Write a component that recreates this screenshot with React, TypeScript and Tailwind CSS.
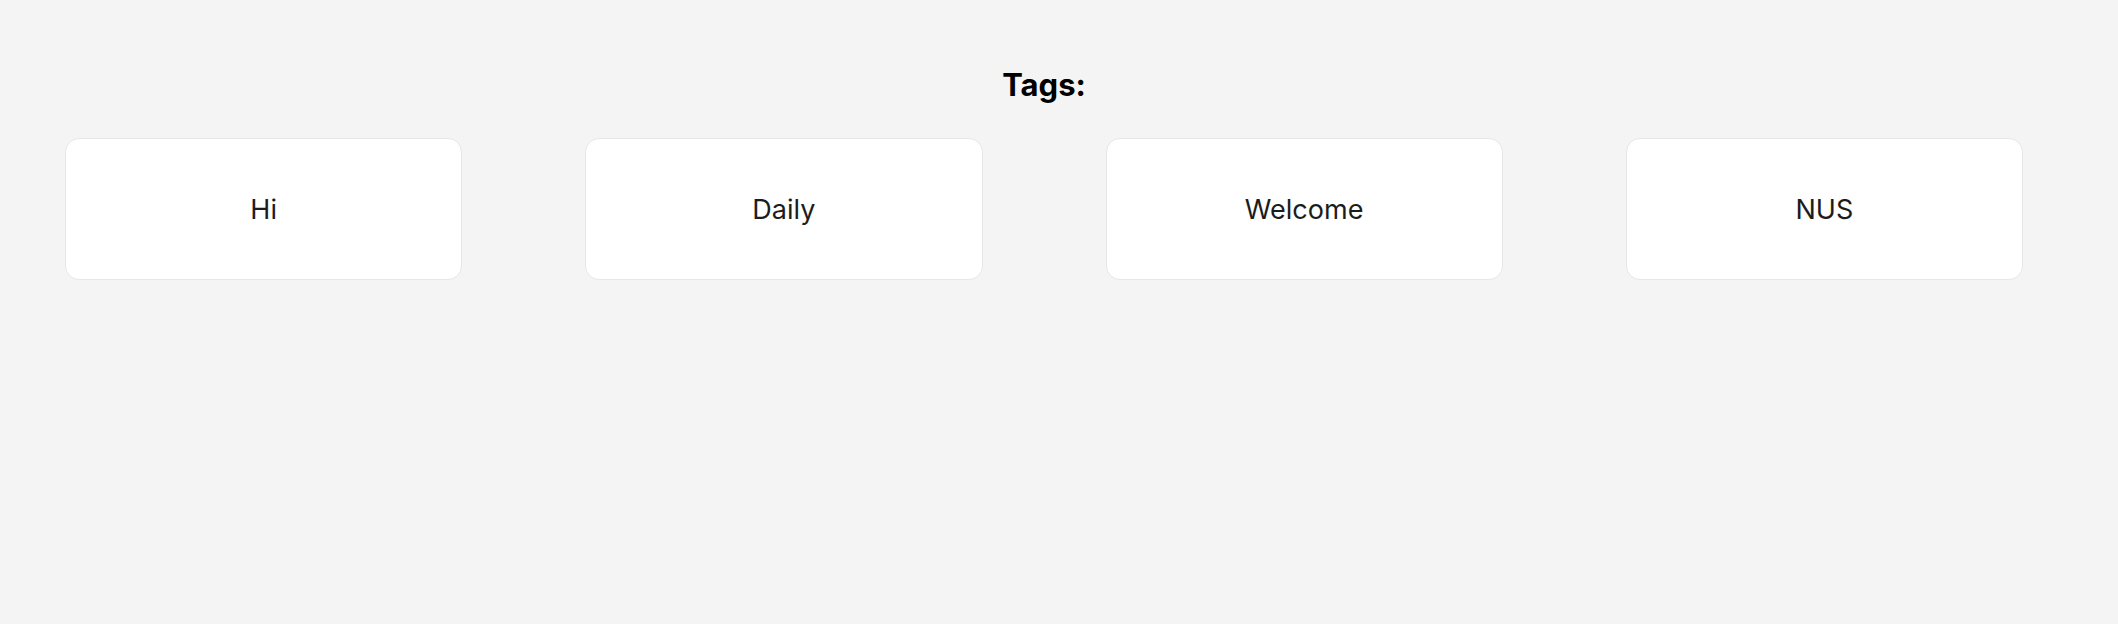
const tags = ['Hi', 'Daily', 'Welcome', 'NUS']

/**
 * Tag overview page
 * Heading plus a row of tag cards
 */
export default function App() {
  return (
    <div className="min-h-screen bg-[#f4f4f4] font-['Inter',sans-serif]">
      <div className="pt-[67px] pl-[65px] pr-[95px]">
        <h1 className="text-center text-[31px] leading-[36px] font-bold text-black">
          Tags:
        </h1>

        {/* Tag cards */}
        <div className="grid grid-cols-4 gap-x-[123px] mt-[35px]">
          {tags.map((tag) => (
            <div
              key={tag}
              className="h-[142px] bg-white rounded-[14px] border border-[#e6e6e6] flex items-center justify-center pt-[2px]"
            >
              <span className="text-[27px] text-[#1c1c1c]">{tag}</span>
            </div>
          ))}
        </div>
      </div>
    </div>
  )
}
